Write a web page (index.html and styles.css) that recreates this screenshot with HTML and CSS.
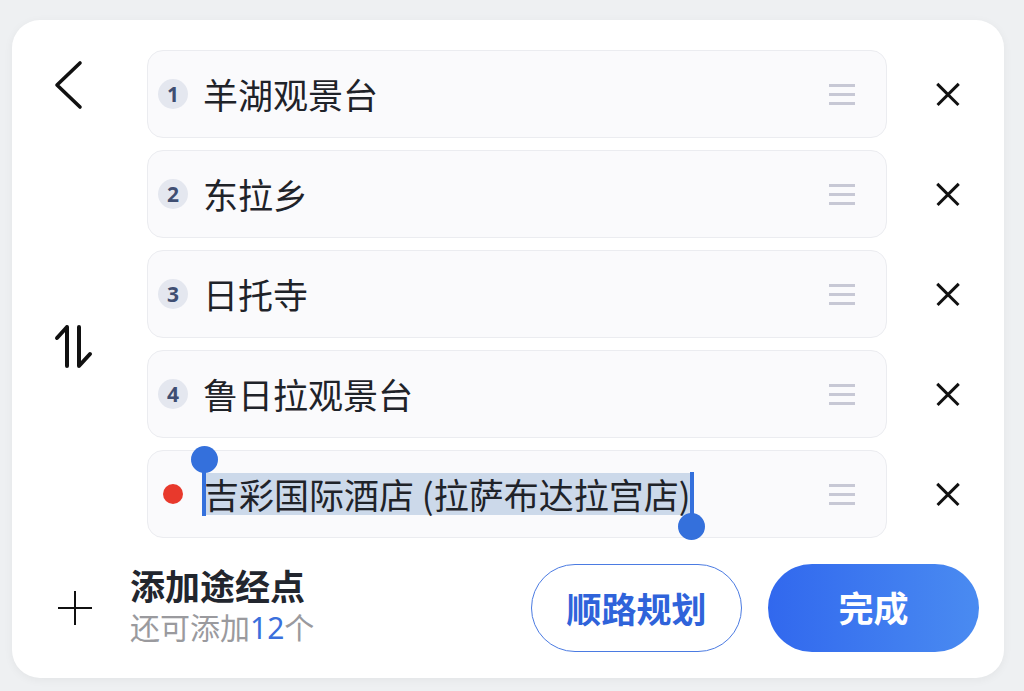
FILE: index.html
```html
<!DOCTYPE html>
<html>
<head>
<meta charset="utf-8">
<meta name="viewport" content="width=device-width,initial-scale=1">
<title>途经点</title>
<link rel="stylesheet" href="styles.css">
</head>
<body>
  <div class="card">
    <div class="main">
      <div class="side">
        <div class="back">
          <svg width="30" height="50" viewBox="0 0 30 50"><path d="M26 3 L3 25 L26 47" fill="none" stroke="#111" stroke-width="3.6" stroke-linecap="round" stroke-linejoin="round"/></svg>
        </div>
        <div class="swap">
          <svg width="40" height="46" viewBox="0 0 40 46"><path d="M13 3 V42 M13 3 L3 14 M25 3 V42 L36 30" fill="none" stroke="#111" stroke-width="4" stroke-linecap="round" stroke-linejoin="round"/></svg>
        </div>
      </div>
      <ul class="stops">
        <li>
          <div class="field"><span class="num">1</span><span class="name">羊湖观景台</span><i class="drag"></i></div>
          <div class="del"><i class="x"></i></div>
        </li>
        <li>
          <div class="field"><span class="num">2</span><span class="name">东拉乡</span><i class="drag"></i></div>
          <div class="del"><i class="x"></i></div>
        </li>
        <li>
          <div class="field"><span class="num">3</span><span class="name">日托寺</span><i class="drag"></i></div>
          <div class="del"><i class="x"></i></div>
        </li>
        <li>
          <div class="field"><span class="num">4</span><span class="name">鲁日拉观景台</span><i class="drag"></i></div>
          <div class="del"><i class="x"></i></div>
        </li>
        <li>
          <div class="field">
            <span class="dot"></span>
            <span class="sel">吉彩国际酒店 (拉萨布达拉宫店)<b class="caret start"></b><b class="caret end"></b></span>
            <i class="drag"></i>
          </div>
          <div class="del"><i class="x"></i></div>
        </li>
      </ul>
    </div>
    <div class="foot">
      <div class="add">
        <i class="plus"></i>
        <div class="add-text">
          <p class="add-title">添加途经点</p>
          <p class="add-sub">还可添加<span class="blue">12</span>个</p>
        </div>
      </div>
      <div class="btn btn-line">顺路规划</div>
      <div class="btn btn-fill">完成</div>
    </div>
  </div>
</body>
</html>
```

FILE: styles.css
```css
* {
  padding: 0;
  margin: 0;
  box-sizing: border-box;
}

ul {
  list-style: none;
}

body {
  background: #eef0f2;
  font-family: "Noto Sans CJK SC", "Noto Sans", sans-serif;
  color: #1f2329;
  height: 691px;
  overflow: hidden;
}

.card {
  margin: 20px 20px 0 12px;
  height: 658px;
  background: #fff;
  border-radius: 28px;
  box-shadow: 0 2px 10px rgba(0, 0, 0, 0.05);
  padding: 30px 0 26px;
  display: flex;
  flex-direction: column;
}

.main {
  display: flex;
}

.side {
  width: 135px;
  padding-left: 42px;
}

.back {
  margin-top: 10px;
  height: 50px;
}

.back svg,
.swap svg {
  display: block;
}

.swap {
  margin-top: 214px;
}

.stops {
  flex: 1;
}

.stops li {
  display: flex;
  height: 88px;
  margin-bottom: 12px;
}

.stops li:last-child {
  margin-bottom: 0;
}

.field {
  flex: 1;
  display: flex;
  align-items: center;
  background: #fafafc;
  border: 1px solid #ebecf0;
  border-radius: 16px;
  padding-left: 10px;
}

.num {
  width: 30px;
  height: 30px;
  border-radius: 50%;
  background: #e4e7ef;
  color: #3f4e72;
  font-family: "Noto Sans", sans-serif;
  font-weight: 700;
  font-size: 21px;
  line-height: 30px;
  text-align: center;
}

.name {
  margin-left: 15px;
  font-size: 35px;
  line-height: 44px;
}

.drag {
  margin-left: auto;
  margin-right: 31px;
  width: 26px;
  height: 21px;
  border-top: 3px solid #c7c8d5;
  border-bottom: 3px solid #c7c8d5;
  position: relative;
}

.drag::after {
  content: "";
  position: absolute;
  left: 0;
  right: 0;
  top: 6px;
  height: 3px;
  background: #c7c8d5;
}

.del {
  width: 117px;
  display: flex;
  align-items: center;
  justify-content: center;
  padding-left: 4px;
}

.x {
  width: 24px;
  height: 24px;
  position: relative;
}

.x::before,
.x::after {
  content: "";
  position: absolute;
  left: -3px;
  top: 10.7px;
  width: 30px;
  height: 2.6px;
  background: #111;
  transform: rotate(45deg);
}

.x::after {
  transform: rotate(-45deg);
}

.dot {
  width: 20px;
  height: 20px;
  border-radius: 50%;
  background: #e8392c;
  margin-left: 5px;
}

.sel {
  margin-left: 21px;
  display: inline-block;
  height: 42px;
  line-height: 42px;
  font-size: 35px;
  background: #ccd9ea;
  position: relative;
  white-space: nowrap;
}

.caret {
  position: absolute;
  width: 4px;
  background: #3470dc;
}

.caret::after {
  content: "";
  position: absolute;
  width: 27px;
  height: 27px;
  border-radius: 50%;
  background: #3470dc;
  left: -11.5px;
}

.caret.start {
  left: -2px;
  top: -3px;
  bottom: -1px;
}

.caret.start::after {
  top: -24px;
}

.caret.end {
  right: -3px;
  top: -1px;
  bottom: -3px;
}

.caret.end::after {
  bottom: -22px;
}

.foot {
  margin-top: 26px;
  height: 88px;
  display: flex;
  align-items: center;
  padding-right: 25px;
}

.add {
  flex: 1;
  display: flex;
  align-items: center;
  padding-left: 46px;
}

.plus {
  width: 34px;
  height: 34px;
  position: relative;
}

.plus::before,
.plus::after {
  content: "";
  position: absolute;
  background: #111;
}

.plus::before {
  left: 0;
  right: 0;
  top: 15.7px;
  height: 2.6px;
}

.plus::after {
  top: 0;
  bottom: 0;
  left: 15.7px;
  width: 2.6px;
}

.add-text {
  margin-left: 38px;
  margin-top: -4px;
}

.add-title {
  font-size: 35px;
  font-weight: 700;
  line-height: 42px;
  color: #22262e;
}

.add-sub {
  font-size: 30px;
  line-height: 40px;
  color: #9a9a9e;
}

.add-sub .blue {
  color: #3a6fdc;
  font-family: "Noto Sans", sans-serif;
}

.btn {
  width: 211px;
  height: 88px;
  border-radius: 44px;
  text-align: center;
  line-height: 86px;
  font-size: 35px;
  font-weight: 700;
  cursor: pointer;
}

.btn-line {
  border: 1.5px solid #4b7be2;
  color: #2f63da;
}

.btn-fill {
  margin-left: 26px;
  background: linear-gradient(90deg, #3168ee, #4a8bf1);
  color: #fff;
}
```
